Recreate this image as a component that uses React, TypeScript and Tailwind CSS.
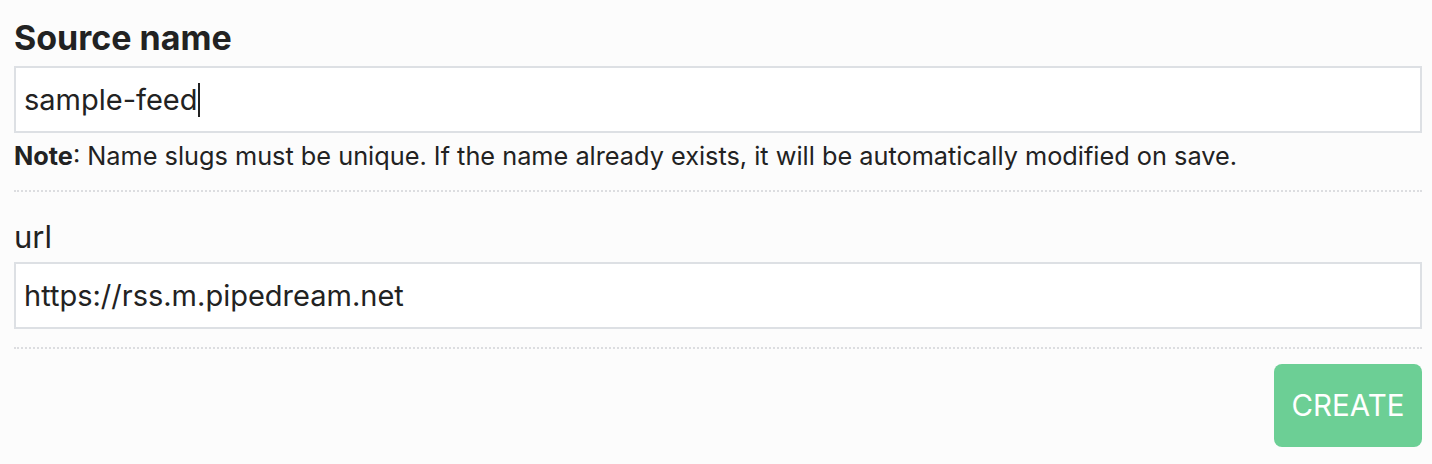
export default function App() {
    return (
        <div className="min-h-[464px] w-full bg-[#fcfcfc] pl-[14px] pr-[10px] pt-[16px] text-[#222222]" style={{ fontFamily: "Inter, 'Noto Sans', sans-serif" }}>
            <form className="flex flex-col">
                <label className="text-[34px] font-bold leading-[44px]">Source name</label>
                {/* focused field, caret drawn by hand so it shows in a still */}
                <div
                    role="textbox"
                    className="mt-[6px] flex h-[67px] w-full items-center border-2 border-[#dde0e4] bg-white px-[8px] text-[29px] text-[#222222]"
                >
                    <span>sample-feed</span>
                    <span className="ml-[1px] h-[34px] w-[2px] bg-[#222222]" />
                </div>
                <p className="mt-[8px] text-[25.3px] leading-[30px]">
                    <strong className="font-bold">Note</strong>: Name slugs must be unique. If the name already exists, it will be automatically modified on save.
                </p>
                <div className="mt-[19px] border-t-2 border-dotted border-[#dcdde0]" />

                <label className="mt-[25px] text-[31px] leading-[40px]">url</label>
                <input
                    defaultValue="https://rss.m.pipedream.net"
                    className="mt-[5px] h-[67px] w-full border-2 border-[#dde0e4] bg-white px-[8px] text-[29px] text-[#222222] outline-none"
                />
                <div className="mt-[18px] border-t-2 border-dotted border-[#dcdde0]" />

                <div className="mt-[15px] flex justify-end">
                    <button type="button" className="h-[83px] w-[148px] rounded-[8px] bg-[#6ccf95] text-[29.5px] text-white">
                        CREATE
                    </button>
                </div>
            </form>
        </div>
    );
}
